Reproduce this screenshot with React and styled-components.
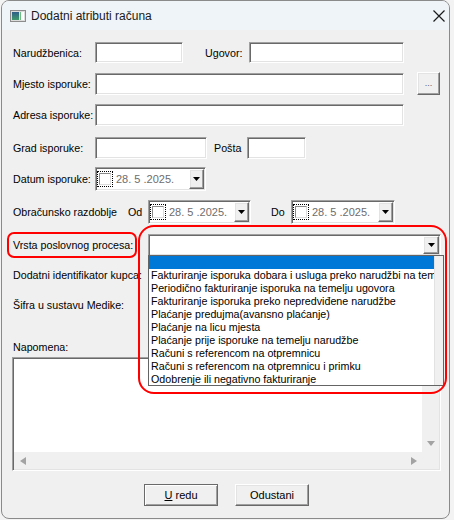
import React from 'react';
import styled, { createGlobalStyle, css } from 'styled-components';

const processTypes = [
  '',
  'Fakturiranje isporuka dobara i usluga preko narudžbi na temelju ugovora',
  'Periodično fakturiranje isporuka na temelju ugovora',
  'Fakturiranje isporuka preko nepredviđene narudžbe',
  'Plaćanje predujma(avansno plaćanje)',
  'Plaćanje na licu mjesta',
  'Plaćanje prije isporuke na temelju narudžbe',
  'Računi s referencom na otpremnicu',
  'Računi s referencom na otpremnicu i primku',
  'Odobrenje ili negativno fakturiranje',
];

export default function App() {
  return (
    <>
      <GlobalStyle />
      <Window>
        <TitleBar>
          <AppIcon />
          <Title>Dodatni atributi računa</Title>
          <CloseBtn>
            <svg width="12" height="12" viewBox="0 0 12 12">
              <path d="M0.5 0.5 L11.5 11.5 M11.5 0.5 L0.5 11.5" stroke="#1b1b1b" strokeWidth="1.2" />
            </svg>
          </CloseBtn>
        </TitleBar>

        <Body>
          <Row $mt={12} $h={21}>
            <Label $w={82}>Narudžbenica:</Label>
            <Input $w={88} $h={21} readOnly />
            <Label $w={44} $ml={22}>Ugovor:</Label>
            <Input $w={155} $h={21} readOnly />
          </Row>

          <Row $mt={9} $h={23}>
            <Label $w={82}>Mjesto isporuke:</Label>
            <Input $w={309} $h={22} readOnly />
            <DotsButton>...</DotsButton>
          </Row>

          <Row $mt={9} $h={22}>
            <Label $w={82}>Adresa isporuke:</Label>
            <Input $w={309} $h={22} readOnly />
          </Row>

          <Row $mt={11} $h={22}>
            <Label $w={82}>Grad isporuke:</Label>
            <Input $w={112} $h={22} readOnly />
            <Label $w={33} $ml={7}>Pošta</Label>
            <Input $w={59} $h={22} readOnly />
          </Row>

          <Row $mt={8} $h={24}>
            <Label $w={82}>Datum isporuke:</Label>
            <DatePicker w={111} />
          </Row>

          <Row $mt={9} $h={24}>
            <Label $w={115}>Obračunsko razdoblje</Label>
            <Label $w={20}>Od</Label>
            <DatePicker w={103} />
            <Label $w={20} $ml={20}>Do</Label>
            <DatePicker w={104} />
          </Row>

          <Row $mt={8} $h={26}>
            <MarkedLabel>Vrsta poslovnog procesa:</MarkedLabel>
            <ComboWrap>
              <Combo>
                <DropButton $w={16}>
                  <Caret />
                </DropButton>
              </Combo>
              <DropList>
                <ListItems>
                  {processTypes.map((t, i) => (
                    <ListItem key={i} $selected={i === 0}>{t}</ListItem>
                  ))}
                </ListItems>
                <ListStrip />
              </DropList>
              <Highlight />
            </ComboWrap>
          </Row>

          <Row $mt={7} $h={20}>
            <Label>Dodatni identifikator kupca:</Label>
          </Row>

          <Row $mt={10} $h={20}>
            <Label>Šifra u sustavu Medike:</Label>
          </Row>

          <Row $mt={25} $h={14}>
            <Label>Napomena:</Label>
          </Row>

          <Memo>
            <MemoText />
            <VScroll>
              <ScrollBtn>
                <svg width="8" height="5" viewBox="0 0 8 5">
                  <polygon points="0,0 8,0 4,5" fill="#a3a3a3" />
                </svg>
              </ScrollBtn>
            </VScroll>
            <HScroll>
              <ScrollBtn>
                <svg width="6" height="8" viewBox="0 0 6 8">
                  <polygon points="6,0 6,8 0,4" fill="#a3a3a3" />
                </svg>
              </ScrollBtn>
              <ScrollBtn>
                <svg width="6" height="8" viewBox="0 0 6 8">
                  <polygon points="0,0 0,8 6,4" fill="#a3a3a3" />
                </svg>
              </ScrollBtn>
            </HScroll>
            <Corner />
          </Memo>

          <Row $mt={13} $h={22}>
            <Button $ml={131} $default>
              <u>U</u> redu
            </Button>
            <Button $ml={17}>Odustani</Button>
          </Row>
        </Body>
      </Window>
    </>
  );
}

function AppIcon() {
  return (
    <IconBox>
      <svg width="16" height="12" viewBox="0 0 16 12">
        <defs>
          <linearGradient id="ig" x1="0" y1="0" x2="0" y2="1">
            <stop offset="0" stopColor="#2f5f8a" />
            <stop offset="1" stopColor="#3f9a6a" />
          </linearGradient>
        </defs>
        <rect x="0.5" y="0.5" width="15" height="11" fill="#dcdcdc" stroke="#8c8c8c" />
        <rect x="2" y="2" width="7" height="8" fill="url(#ig)" />
        <rect x="10" y="2" width="4" height="8" fill="#ffffff" />
        <rect x="10" y="2" width="1" height="8" fill="#6cbf7c" />
      </svg>
    </IconBox>
  );
}

function DatePicker({ w }) {
  return (
    <DateBox $w={w}>
      <FocusRing>
        <CheckSquare />
      </FocusRing>
      <DateText>28. 5 .2025.</DateText>
      <DropButton $w={15}>
        <Caret />
      </DropButton>
    </DateBox>
  );
}

function Caret() {
  return (
    <svg width="7" height="4" viewBox="0 0 7 4">
      <polygon points="0,0 7,0 3.5,4" fill="#000" />
    </svg>
  );
}

const GlobalStyle = createGlobalStyle`
  html, body {
    margin: 0;
    padding: 0;
    background: #f3f3f3;
  }
  body {
    font-family: "Liberation Sans", Arial, sans-serif;
    font-size: 10.7px;
    color: #000;
  }
`;

const sunken = css`
  box-sizing: border-box;
  border: 1px solid;
  border-color: #a0a0a0 #ffffff #ffffff #a0a0a0;
  box-shadow: inset 1px 1px 0 #696969, inset -1px -1px 0 #e3e3e3;
`;

const raised = css`
  box-sizing: border-box;
  border: 1px solid;
  border-color: #ffffff #696969 #696969 #ffffff;
  box-shadow: inset -1px -1px 0 #a0a0a0, inset 1px 1px 0 #e3e3e3;
  background: #f0f0f0;
`;

const Window = styled.div`
  box-sizing: border-box;
  width: 449px;
  height: 519px;
  margin-left: 1px;
  border: 1px solid #8a8a8a;
  border-radius: 8px;
  background: #f0f0f0;
  overflow: hidden;
`;

const TitleBar = styled.div`
  display: flex;
  align-items: center;
  height: 29px;
  padding-left: 8px;
  background: #eff4f9;
`;

const IconBox = styled.span`
  display: flex;
  width: 16px;
  height: 12px;
`;

const Title = styled.span`
  margin-left: 5px;
  font-size: 12px;
  color: #1a1a1a;
`;

const CloseBtn = styled.span`
  display: flex;
  margin-left: auto;
  margin-right: 4px;
  margin-top: 1px;
`;

const Body = styled.div`
  padding-left: 11px;
`;

const Row = styled.div`
  display: flex;
  align-items: center;
  height: ${(p) => p.$h}px;
  margin-top: ${(p) => p.$mt}px;
`;

const Label = styled.span`
  flex: none;
  width: ${(p) => (p.$w ? `${p.$w}px` : 'auto')};
  margin-left: ${(p) => p.$ml || 0}px;
  white-space: nowrap;
`;

const MarkedLabel = styled.span`
  box-sizing: border-box;
  display: flex;
  align-items: center;
  flex: none;
  width: 130px;
  height: 26px;
  margin-left: -6px;
  padding-left: 4px;
  border: 2px solid #ff0000;
  border-radius: 7px;
  white-space: nowrap;
`;

const Input = styled.input`
  ${sunken};
  flex: none;
  width: ${(p) => p.$w}px;
  height: ${(p) => p.$h}px;
  margin: 0;
  padding: 0 3px;
  background: #fff;
  outline: none;
  font: inherit;
`;

const DotsButton = styled.span`
  ${raised};
  display: flex;
  align-items: flex-end;
  justify-content: center;
  width: 23px;
  height: 23px;
  margin-left: 13px;
  padding-bottom: 6px;
  font-size: 9px;
  line-height: 9px;
  color: #5a5a7a;
`;

const DateBox = styled.div`
  ${sunken};
  display: flex;
  align-items: center;
  flex: none;
  width: ${(p) => p.$w}px;
  height: 24px;
  padding: 1px;
  background: #fff;
`;

const FocusRing = styled.span`
  box-sizing: border-box;
  display: flex;
  align-items: center;
  justify-content: center;
  width: 16px;
  height: 16px;
  border: 1px dotted #000;
`;

const CheckSquare = styled.span`
  box-sizing: border-box;
  width: 12px;
  height: 12px;
  border: 1px solid;
  border-color: #8a8a8a #dcdcdc #dcdcdc #8a8a8a;
  background: #fff;
`;

const DateText = styled.span`
  flex: 1;
  margin-left: 3px;
  font-size: 11px;
  color: #6d6d6d;
  white-space: nowrap;
`;

const DropButton = styled.span`
  ${raised};
  display: flex;
  align-items: center;
  justify-content: center;
  flex: none;
  width: ${(p) => p.$w}px;
  height: 100%;
`;

const ComboWrap = styled.div`
  position: relative;
  margin-left: 11px;
`;

const Combo = styled.div`
  ${sunken};
  display: flex;
  justify-content: flex-end;
  width: 293px;
  height: 22px;
  padding: 1px;
  background: #fff;
`;

const DropList = styled.div`
  position: absolute;
  top: 21px;
  left: 0;
  z-index: 2;
  box-sizing: border-box;
  display: flex;
  width: 296px;
  height: 131px;
  border: 1px solid #646464;
  background: #fff;
`;

const ListItems = styled.div`
  flex: 1;
  min-width: 0;
`;

const ListItem = styled.div`
  height: 13px;
  line-height: 13px;
  padding-left: 2px;
  white-space: nowrap;
  overflow: hidden;
  background: ${(p) => (p.$selected ? '#0078d7' : 'transparent')};
  color: ${(p) => (p.$selected ? '#fff' : '#000')};
`;

const ListStrip = styled.div`
  flex: none;
  width: 8px;
  background: #f0f0f0;
  border-left: 1px solid #e2e2e2;
`;

const Highlight = styled.div`
  position: absolute;
  left: -10px;
  top: -9px;
  z-index: 3;
  box-sizing: border-box;
  width: 309px;
  height: 169px;
  border: 2px solid #ff0000;
  border-radius: 16px;
  pointer-events: none;
`;

const Memo = styled.div`
  ${sunken};
  display: grid;
  grid-template-columns: 1fr 17px;
  grid-template-rows: 1fr 17px;
  width: 429px;
  height: 114px;
  margin-top: 3px;
  margin-left: -1px;
  padding: 1px;
  background: #f0f0f0;
`;

const MemoText = styled.div`
  background: #fff;
`;

const VScroll = styled.div`
  display: flex;
  flex-direction: column;
  justify-content: flex-end;
  background: #f0f0f0;
`;

const HScroll = styled.div`
  display: flex;
  justify-content: space-between;
  background: #f0f0f0;
`;

const ScrollBtn = styled.span`
  display: flex;
  align-items: center;
  justify-content: center;
  width: 17px;
  height: 17px;
`;

const Corner = styled.div`
  background: #f0f0f0;
`;

const Button = styled.button`
  ${raised};
  flex: none;
  width: 74px;
  height: 22px;
  margin: 0 0 0 ${(p) => p.$ml || 0}px;
  padding: 0;
  font: 11px "Liberation Sans", Arial, sans-serif;
  color: #000;
  ${(p) =>
    p.$default &&
    css`
      border-color: #6a6a6a;
      box-shadow: inset 1px 1px 0 #ffffff, inset -1px -1px 0 #a0a0a0;
    `}
`;
